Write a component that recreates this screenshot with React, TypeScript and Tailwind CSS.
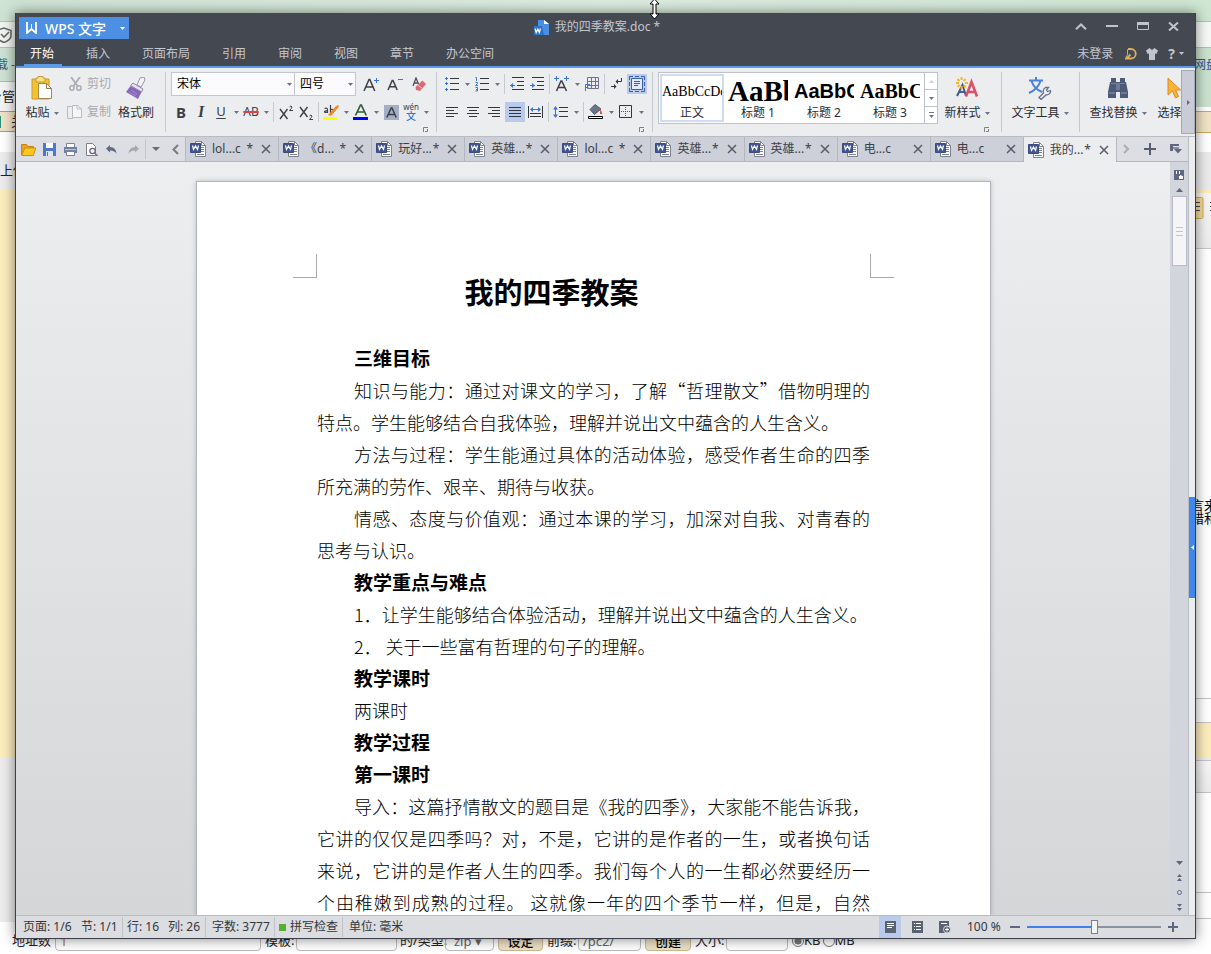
import type { ReactNode } from 'react'
import clsx from 'clsx'

const UI_FONT = 'font-["Noto_Sans","Noto_Sans_CJK_SC",sans-serif]'

interface IconProps {
  w: number
  h: number
  children: ReactNode
  className?: string
}

function Icon({ w, h, children, className }: IconProps) {
  return (
    <svg
      width={w}
      height={h}
      viewBox={`0 0 ${w} ${h}`}
      fill="none"
      aria-hidden="true"
      className={clsx('shrink-0', className)}
    >
      {children}
    </svg>
  )
}

function Caret({ className = 'text-[#6d7489]' }: { className?: string }) {
  return (
    <Icon w={5} h={3} className={className}>
      <path d="M0 0h5L2.500 3z" fill="currentColor" />
    </Icon>
  )
}

/* ---------- desktop behind the window ---------- */

function Backdrop() {
  return (
    <div className="absolute inset-0 -z-10 flex flex-col overflow-hidden bg-white text-[13px] text-[#222]">
      <div className="h-[21px] shrink-0 bg-linear-to-r from-[#cfe3d4] via-[#dcebdf] to-[#cfe6d3]" />
      <div className="flex min-h-0 flex-1 justify-between">
        <div className="flex w-4 flex-col overflow-hidden whitespace-nowrap">
          <div className="flex h-[27px] shrink-0 items-center border-y border-[#b9bdba] bg-[#f1f5f1]">
            <Icon w={12} h={16}>
              <path d="M-4 3.500 4 1l7 2.500V9c0 3-3 5-7 6.500C0 14-3 12-4 9z" stroke="#686868" strokeWidth="1.600" />
              <path d="m1 7 3 3 5-5" stroke="#686868" strokeWidth="1.600" />
            </Icon>
          </div>
          <div className="flex h-[34px] shrink-0 items-center border-b border-[#aebbb0] bg-[#cfe2d3] text-[12px] text-[#2d5c7f]">
            <span className="-ml-1">载 -</span>
          </div>
          <div className="flex h-[29px] shrink-0 items-center bg-[#f4f4f4]">
            <span className="-ml-[11px]">台管理</span>
          </div>
          <div className="flex h-[21px] shrink-0 items-center border-y border-[#c79a4a] bg-[#efe2c8]">
            <span className="h-3 w-px shrink-0 bg-[#2b8f7a]" />
            <span className="ml-[10px]">关</span>
          </div>
          <div className="h-5 shrink-0 bg-white" />
          <div className="flex h-[37px] shrink-0 items-center bg-[#ececec]">上传</div>
          <div className="h-[568px] shrink-0 bg-[#fdedbd]" />
          <div className="flex-1 bg-[#ececec]" />
        </div>
        <div className="flex w-4 flex-col overflow-hidden whitespace-nowrap">
          <div className="h-[27px] shrink-0 border-y border-[#b9bdba] bg-[#f6f9f6]" />
          <div className="h-[59px] shrink-0 bg-[#cbe2cf] pt-2 text-[12px] text-[#2d4f94]">
            <span className="-ml-px">网盘</span>
          </div>
          <div className="h-1 shrink-0 bg-white" />
          <div className="h-[22px] shrink-0 border-y border-[#c9a95c] bg-[#f0e3c6]" />
          <div className="h-[19px] shrink-0 bg-white" />
          <div className="h-[38px] shrink-0 bg-[#ebebeb]" />
          <div className="h-[3px] shrink-0 bg-[#fdedbd]" />
          <div className="flex h-[56px] shrink-0 items-start border-b border-[#c8c8c8] bg-linear-to-b from-[#f7f7f7] to-[#ededed] pt-1">
            <Icon w={16} h={22}>
              <rect x="-4" y=".5" width="12" height="21" rx="1.500" fill="#f6dc9a" stroke="#d6a758" />
              <path d="M0 5.500h5M0 9.500h5M0 13.500h5M15 5.500h1M15 9.500h1M15 13.500h1" stroke="#444" />
            </Icon>
          </div>
          <div className="h-[250px] shrink-0" />
          <div className="text-[13px] leading-[13px] text-black">
            <div className="-ml-1">言来</div>
            <div className="-ml-1">错和</div>
          </div>
          <div className="h-[174px] shrink-0 border-b border-[#c4c4c4]" />
          <div className="h-[24px] shrink-0 border-b border-[#c4c4c4]" />
          <div className="h-[34px] shrink-0 bg-[#fdedbd]" />
          <div className="h-[4px] shrink-0 border-b border-[#c4c4c4] bg-[#ececec]" />
          <div className="h-[32px] shrink-0 border-b border-[#c4c4c4] bg-linear-to-b from-[#f7f7f7] to-[#ececec]" />
          <div className="h-[100px] shrink-0 border-b border-[#c4c4c4]" />
          <div className="h-[26px] shrink-0 border-b border-[#c4c4c4]" />
        </div>
      </div>
      <form className="flex h-[32px] shrink-0 items-end pb-[3px] pl-3 whitespace-nowrap">
        <label className="flex h-7 w-[249px] items-center">
          <span className="w-[43px] pt-2">地址数</span>
          <input defaultValue="1" className="h-7 w-[206px] rounded border border-[#bbb] px-1 pt-2 text-[#c07020]" />
        </label>
        <label className="ml-1 flex h-7 items-center">
          <span className="w-[31px] pt-2">模板:</span>
          <input className="h-7 w-[101px] rounded border border-[#bbb]" />
        </label>
        <label className="ml-[3px] flex h-7 items-center">
          <span className="w-[45px] pt-2">的/类型:</span>
          <select className="h-7 w-[49px] appearance-none rounded border border-[#bbb] px-2 pt-2 text-[#666]">
            <option>zip ▾</option>
          </select>
        </label>
        <button type="button" className="ml-1 h-7 w-[45px] rounded border border-[#c9b78f] bg-[#ece0c6] pt-2 font-medium text-black">
          设定
        </button>
        <label className="ml-1 flex h-7 items-center">
          <span className="w-[31px] pt-2">前缀:</span>
          <input defaultValue="/pc2/" className="h-7 w-[63px] rounded border border-[#bbb] px-1 pt-2 text-[#666]" />
        </label>
        <button type="button" className="ml-1 h-7 w-[46px] rounded border border-[#c9b78f] bg-[#ece0c6] pt-2 font-medium text-black">
          创建
        </button>
        <label className="ml-1 flex h-7 items-center">
          <span className="w-[31px] pt-2">大小:</span>
          <input className="h-7 w-[62px] rounded border border-[#bbb]" />
        </label>
        <label className="ml-1 flex h-7 items-center pt-2">
          <input type="radio" name="unit" defaultChecked className="size-3 accent-[#777]" />KB
        </label>
        <label className="ml-[2px] flex h-7 items-center pt-2">
          <input type="radio" name="unit" className="size-3" />MB
        </label>
      </form>
    </div>
  )
}

/* ---------- title bar ---------- */

const menuTabs = ['开始', '插入', '页面布局', '引用', '审阅', '视图', '章节', '办公空间']

function TitleBar() {
  const ctl = 'flex h-[26px] w-[31px] items-center justify-center text-[#c0c4cf]'
  return (
    <header className="border-b-2 border-[#5b9bea] bg-[#444851]">
      <div className="flex h-7 items-start pr-[6px] pl-[3px]">
        <button className="mt-1 flex h-[22px] w-[110px] items-center bg-[#4c8fe3] pl-[7px] text-[14px] font-medium text-white">
          <Icon w={12} h={12}>
            <path d="M1 0v11l4.500-4L10 11V0" stroke="#fff" strokeWidth="1.800" />
            <path d="M5.500 2v4" stroke="#fff" strokeWidth="1" />
          </Icon>
          <span className="ml-[7px] flex-1 text-left whitespace-nowrap">WPS 文字</span>
          <Caret className="mr-1 text-white" />
        </button>
        <div className="flex h-7 flex-1 items-center justify-center gap-[6px] text-[12px] text-[#c3c7d0]">
          <Icon w={15} h={15}>
            <path d="M4 0h6l5 4v11H4z" fill="#4a90e2" />
            <path d="M10 0v4h5z" fill="#fff" />
            <path d="M0 6h8l2 9H0z" fill="#2f72c6" />
            <path d="m1 8.500 1.200 4L3.800 9l1.500 3.500 1.200-4" stroke="#fff" strokeWidth="1.200" />
          </Icon>
          <span>我的四季教案.doc *</span>
        </div>
        <button className={ctl} aria-label="收起功能区">
          <Icon w={12} h={7}><path d="M1 6.300 6 1.500l5 4.800" stroke="currentColor" strokeWidth="2" /></Icon>
        </button>
        <button className={ctl} aria-label="最小化">
          <Icon w={12} h={2}><path d="M0 1h12" stroke="currentColor" strokeWidth="2" /></Icon>
        </button>
        <button className={ctl} aria-label="最大化">
          <Icon w={12} h={8}><path d="M.5 0v7.500h11V0" stroke="currentColor" /><path d="M0 0h12v3H0z" fill="currentColor" /></Icon>
        </button>
        <button className={ctl} aria-label="关闭">
          <Icon w={11} h={9}><path d="m1 .5 9 8M10 .5l-9 8" stroke="currentColor" strokeWidth="2" /></Icon>
        </button>
      </div>
      <div className="flex h-[25px] pr-[11px] pl-2 text-[12px] text-[#c3c7d0]">
        <nav className="flex flex-1 gap-[18px]">
          {menuTabs.map((name, i) => (
            <button
              key={name}
              className={clsx('pr-2 pl-[6px]', i === 0 ? 'border-b-2 border-[#5b9bea] pt-[2px] text-white' : '')}
            >
              {name}
            </button>
          ))}
        </nav>
        <div className="flex items-center">
          <button>未登录</button>
          <button className="ml-3" aria-label="稻壳">
            <Icon w={12} h={12}>
              <path d="M3 1h3a4.500 4.500 0 0 1 0 9.500H1.500l4-4" stroke="#dcae5c" strokeWidth="1.800" />
              <path d="M2.500 1.500v5L0 11" stroke="#dcae5c" strokeWidth="1" />
            </Icon>
          </button>
          <button className="ml-[9px]" aria-label="皮肤">
            <Icon w={12} h={12}>
              <path d="M3.500 0 0 2.500 1.500 6 3 5.500V12h6V5.500l1.500.5L12 2.500 8.500 0 6 2z" fill="#c0c4cf" />
            </Icon>
          </button>
          <button className="ml-[10px] flex items-center gap-1 text-[14px] font-bold" aria-label="帮助">
            ?<Caret className="text-[#c0c4cf]" />
          </button>
        </div>
      </div>
    </header>
  )
}

/* ---------- ribbon ---------- */

function Divider() {
  return <div className="mx-[5px] h-[60px] w-px shrink-0 bg-[#c6c9cf]" />
}

function SmallDivider() {
  return <div className="mx-[2px] h-5 w-px shrink-0 bg-[#c6c9cf]" />
}

function Tool({ label, active, children }: { label: string; active?: boolean; children: ReactNode }) {
  return (
    <button
      aria-label={label}
      className={clsx('flex size-5 shrink-0 items-center justify-center', active && 'bg-[#b9caea]')}
    >
      {children}
    </button>
  )
}

function Drop() {
  return (
    <button aria-label="更多" className="flex h-5 w-[10px] shrink-0 items-center justify-center">
      <Caret />
    </button>
  )
}

interface BigToolProps {
  label: string
  drop?: boolean
  className: string
  children: ReactNode
}

function BigTool({ label, drop, className, children }: BigToolProps) {
  return (
    <button className={clsx('flex shrink-0 flex-col items-center', className)}>
      <span className="flex h-8 items-center">{children}</span>
      <span className="flex h-[18px] items-center gap-1 whitespace-nowrap">
        {label}
        {drop && <Caret />}
      </span>
    </button>
  )
}

function Launcher() {
  return (
    <div className="flex h-2 items-end justify-end pr-[3px]">
      <button aria-label="对话框">
        <Icon w={5} h={5}>
          <path d="M.5 5V.5H5" stroke="#7a8192" />
          <path d="M2 4.500h2.500V2" stroke="#7a8192" />
        </Icon>
      </button>
    </div>
  )
}

interface ComboProps {
  label: string
  value: string
  className: string
}

function Combo({ label, value, className }: ComboProps) {
  return (
    <div className={clsx('relative h-6', className)}>
      <select
        aria-label={label}
        className="h-6 w-full appearance-none border border-[#c3c6cc] bg-[#fbfbfd] pl-[5px] text-[12px] leading-[22px] text-black"
      >
        <option>{value}</option>
      </select>
      <Caret className="pointer-events-none absolute top-[11px] right-[3px] text-[#6d7489]" />
    </div>
  )
}

function ClipboardGroup() {
  return (
    <div className="flex shrink-0 pr-1 pl-[6px]">
      <BigTool label="粘贴" drop className="w-10">
        <Icon w={22} h={24}>
          <path d="M1 3h17v20H1z" fill="#f4c22f" stroke="#c89a35" />
          <path d="M5 2h2V.5h5V2h2v4H5z" fill="#fbe08a" stroke="#c89a35" />
          <path d="M7.500 7.500h8l5 5v10h-13z" fill="#fff" stroke="#a88b4a" />
          <path d="M15.500 7.500v5h5" stroke="#8a7a55" />
        </Icon>
      </BigTool>
      <div className="ml-1 flex w-[47px] flex-col gap-1 text-[#a7a9ad]">
        <button className="flex h-6 items-center gap-[5px] pl-[3px] whitespace-nowrap">
          <Icon w={13} h={14}>
            <path d="m2 0 6.500 9M11 0 4.500 9" stroke="#a9acb1" strokeWidth="1.800" />
            <circle cx="3" cy="11" r="2.200" stroke="#a9acb1" strokeWidth="1.500" />
            <circle cx="10" cy="11" r="2.200" stroke="#a9acb1" strokeWidth="1.500" />
          </Icon>
          剪切
        </button>
        <button className="flex h-6 items-center gap-[5px] pl-px whitespace-nowrap">
          <Icon w={15} h={15}>
            <path d="M6 1.500H.5v12H6" stroke="#b9bbc0" />
            <path d="M5.500.500h5l4 3.500v8.500h-9z" fill="#f6f6f7" stroke="#b9bbc0" />
            <path d="M10 .5V4h4.500" stroke="#b9bbc0" />
          </Icon>
          复制
        </button>
      </div>
      <BigTool label="格式刷" className="ml-[3px] w-10">
        <Icon w={20} h={23}>
          <path d="m14 1 4-1 1 3-4 7-4-2z" fill="#f5f3f8" stroke="#9a95ab" />
          <path d="m7 6 10 6-1.500 3L4.500 8.500z" fill="#e5e1ee" stroke="#9088a8" />
          <path d="M4.500 9 0 15l12 7 3.500-7z" fill="#8667bb" />
          <path d="m5 13 6 4M3 15l7 4" stroke="#a48ad0" />
        </Icon>
      </BigTool>
    </div>
  )
}

function FontGroup() {
  return (
    <div className="w-[260px] shrink-0">
      <div className="flex h-6 items-center">
        <Combo label="字体" value="宋体" className="w-[124px]" />
        <Combo label="字号" value="四号" className="-ml-px w-[62px]" />
        <div className="ml-[5px] flex flex-1 items-center justify-between pr-[2px]">
          <Tool label="增大字号">
            <Icon w={16} h={15}>
              <path d="M1 14 6 2.500h.8l5 11.500M3 10h6.800" stroke="#3c3f46" strokeWidth="1.500" />
              <path d="M11 3.500h5M13.500 1v5" stroke="#3b74d8" />
            </Icon>
          </Tool>
          <Tool label="减小字号">
            <Icon w={16} h={14}>
              <path d="m1 13 4.200-9.500h.8L10.200 13M2.800 9.800h5.800" stroke="#3c3f46" strokeWidth="1.500" />
              <path d="M11 2.500h5" stroke="#3b74d8" />
            </Icon>
          </Tool>
          <Tool label="清除格式">
            <Icon w={15} h={15}>
              <path d="m1 9 3-8 2.500 6M2 6h4" stroke="#4d5057" strokeWidth="1.300" />
              <path d="m3.500 10 7-6.500L14 7l-6 7-4-1z" fill="#dc6a73" />
              <path d="m5.500 8 5 3.500" stroke="#f3b9bd" />
            </Icon>
          </Tool>
        </div>
      </div>
      <div className="mt-1 flex h-6 items-center text-[#3c3f46]">
        <Tool label="加粗"><span className="text-[15px] font-bold">B</span></Tool>
        <Tool label="倾斜"><span className='font-["Liberation_Serif",serif] text-[16px] font-bold italic'>I</span></Tool>
        <Tool label="下划线"><span className="text-[13px] underline underline-offset-2">U</span></Tool>
        <Drop />
        <Tool label="删除线"><span className="text-[12px] line-through decoration-[#e04343] decoration-2">AB</span></Tool>
        <Drop />
        <SmallDivider />
        <Tool label="上标">
          <Icon w={15} h={15}>
            <path d="m1 4 7.500 10M8.500 4 1 14" stroke="currentColor" strokeWidth="1.400" />
            <path d="M10.500 2q1.500-2 2.500 0 0 1-2.500 3.500H14" stroke="currentColor" />
          </Icon>
        </Tool>
        <Tool label="下标">
          <Icon w={15} h={15}>
            <path d="m1 2 7.500 10M8.500 2 1 12" stroke="currentColor" strokeWidth="1.400" />
            <path d="M10.500 11q1.500-2 2.500 0 0 1-2.500 3.500H14" stroke="currentColor" />
          </Icon>
        </Tool>
        <SmallDivider />
        <Tool label="突出显示">
          <Icon w={16} h={16}>
            <path d="M1.500 4.500q3-1 3 1V9M4.500 6.500C0 6.500 1 9.500 4.500 8M7.500 1v8q4 0 3-3-1-1.500-3 0" stroke="#3c3f46" strokeWidth="1.200" />
            <path d="m5 11 8-9 3-1-1 3-7 8z" fill="#f08a2c" />
            <path d="M0 13h14v3H0z" fill="#ff0" />
          </Icon>
        </Tool>
        <Drop />
        <Tool label="字体颜色">
          <Icon w={16} h={16}>
            <path d="M2.500 11.500 7.500 1h.8l5 10.500M4.500 8h7" stroke="#2f5d3a" strokeWidth="1.700" />
            <path d="M0 13h15v3H0z" fill="#00f" />
          </Icon>
        </Tool>
        <Drop />
        <Tool label="字符底纹">
          <Icon w={15} h={15}>
            <path d="M0 0h15v15H0z" fill="#a3afc4" />
            <path d="M2.800 12.500 7.200 3h.8l4.200 9.500M4.500 9.500h6" stroke="#3c3f46" strokeWidth="1.500" />
          </Icon>
        </Tool>
        <Tool label="拼音指南">
          <span className="flex flex-col items-center">
            <span className="text-[8px] leading-[9px]">wén</span>
            <span className="text-[10px] leading-[11px] font-medium text-[#3b74d8]">文</span>
          </span>
        </Tool>
        <Drop />
      </div>
      <Launcher />
    </div>
  )
}

/* Horizontal text lines used by the alignment buttons. */
function AlignIcon({ kind }: { kind: 'left' | 'center' | 'right' | 'justify' }) {
  const paths = {
    left: 'M0 .5h12M0 3.500h8M0 6.500h12M0 9.500h8',
    center: 'M0 .5h12M2 3.500h8M0 6.500h12M2 9.500h8',
    right: 'M0 .5h12M4 3.500h8M0 6.500h12M4 9.500h8',
    justify: 'M0 .5h12M0 3.500h12M0 6.500h12M0 9.500h12',
  }
  return (
    <Icon w={12} h={10}>
      <path d={paths[kind]} stroke="#33363d" />
    </Icon>
  )
}

function ParagraphGroup() {
  return (
    <div className="w-[205px] shrink-0">
      <div className="flex h-6 items-center">
        <Tool label="项目符号">
          <Icon w={14} h={14}>
            <path d="M5 1.500h9M5 6.500h9M5 12.500h9" stroke="#33363d" />
            <path d="M0 1.500h3M1.500 0v3M0 6.500h3M1.500 5v3M0 12.500h3M1.500 11v3" stroke="#3b74d8" />
          </Icon>
        </Tool>
        <Drop />
        <Tool label="编号">
          <Icon w={14} h={16}>
            <path d="M5 2.500h9M5 7.500h9M5 13.500h9" stroke="#33363d" />
            <path d="M.5 1.500h1V5M.5 6.500h2v1l-2 2h2.500M.5 11.500h2v3.500h-2M1 13.500h1.500" stroke="#3b74d8" />
          </Icon>
        </Tool>
        <Drop />
        <SmallDivider />
        <Tool label="减少缩进">
          <Icon w={14} h={14}>
            <path d="M2 .5h12M7 4.500h7M7 8.500h7M2 12.500h12" stroke="#33363d" />
            <path d="M0 8.500h5" stroke="#3b74d8" />
            <path d="m3 6-3 2.500L3 11z" fill="#3b74d8" />
          </Icon>
        </Tool>
        <Tool label="增加缩进">
          <Icon w={14} h={14}>
            <path d="M2 .5h12M7 4.500h7M7 8.500h7M2 12.500h12" stroke="#33363d" />
            <path d="M0 8.500h5" stroke="#3b74d8" />
            <path d="m2 6 3 2.500L2 11z" fill="#3b74d8" />
          </Icon>
        </Tool>
        <SmallDivider />
        <Tool label="文字工具">
          <Icon w={16} h={16}>
            <path d="m2.500 15 4.500-10h.8L12.500 15M4.500 11.500h6" stroke="#3c3f46" strokeWidth="1.500" />
            <path d="M0 2.500h5M2.500 0v5M10 2.500h5M12.500 0v5" stroke="#3b74d8" />
          </Icon>
        </Tool>
        <Drop />
        <Tool label="插入表格">
          <Icon w={14} h={14}>
            <path d="M2.500.5h11v11h-11zM6.500.5v11M10.500.5v11M2.500 4.500h11M2.500 8.500h11" stroke="#6d7489" />
            <path d="M.5 14V7.500H5M.5 10.500h3" stroke="#3b74d8" />
          </Icon>
        </Tool>
        <SmallDivider />
        <Tool label="制表位">
          <Icon w={12} h={12}>
            <path d="M10.500 0v3.500H5M0 8.500h4" stroke="#33363d" />
            <path d="M7 1v5L4.500 3.500zM3 6v5l2.500-2.500z" fill="#33363d" />
          </Icon>
        </Tool>
        <Tool label="显示段落布局" active>
          <Icon w={16} h={16}>
            <path d="M.5 4V.5H4M12 .5h3.500V4M15.500 12v3.500H12M4 15.500H.5V12M.5 6v4M15.500 6v4M6 .5h4M6 15.500h4" stroke="#3b5fae" />
            <path d="M2.500 2.500h11v11h-11z" fill="#e4ebf8" stroke="#3b5fae" />
            <path d="M5 5.500h6M5 7.500h6M5 9.500h4" stroke="#3b5fae" />
          </Icon>
        </Tool>
      </div>
      <div className="mt-1 flex h-6 items-center">
        <div className="flex gap-px">
          <Tool label="左对齐"><AlignIcon kind="left" /></Tool>
          <Tool label="居中"><AlignIcon kind="center" /></Tool>
          <Tool label="右对齐"><AlignIcon kind="right" /></Tool>
          <Tool label="两端对齐" active><AlignIcon kind="justify" /></Tool>
          <Tool label="分散对齐">
            <Icon w={16} h={12}>
              <path d="M.5 0v12M14.500 0v12M2 7.500h11M2 10.500h11" stroke="#33363d" />
              <path d="M3 3.500h9" stroke="#3b74d8" />
              <path d="M5 1 2 3.500 5 6zM10 1l3 2.500L10 6z" fill="#3b74d8" />
            </Icon>
          </Tool>
        </div>
        <SmallDivider />
        <Tool label="行距">
          <Icon w={16} h={12}>
            <path d="M6 1.500h9M6 5.500h9M6 10.500h9" stroke="#33363d" />
            <path d="M2.500 1v10" stroke="#3b74d8" />
            <path d="M0 3.500 2.500 0 5 3.500zM0 8.500 2.500 12 5 8.500z" fill="#3b74d8" />
          </Icon>
        </Tool>
        <Drop />
        <SmallDivider />
        <Tool label="底纹颜色">
          <Icon w={16} h={16}>
            <path d="m2 5.500 5-5L13 5 6.500 10.500z" fill="#6b7388" stroke="#525a6e" />
            <path d="m12 4 2.500 6H12z" fill="#d9534a" />
            <path d="M.5 12.500h14v2H.5z" fill="#fff" stroke="#000" />
          </Icon>
        </Tool>
        <Drop />
        <Tool label="边框">
          <Icon w={14} h={14}>
            <path d="M.5.5h12v12H.5z" stroke="#33363d" />
            <path d="M6.500 2v9M2 6.500h9" stroke="#555" strokeDasharray="1 1" />
          </Icon>
        </Tool>
        <Drop />
      </div>
      <Launcher />
    </div>
  )
}

const styleList = [
  { name: '正文', sample: 'AaBbCcDd', cls: 'font-["Liberation_Serif",serif] text-[14px]', active: true },
  { name: '标题 1', sample: 'AaBb', cls: 'font-["Liberation_Serif",serif] text-[29px] font-bold', active: false },
  { name: '标题 2', sample: 'AaBbC', cls: 'font-["Liberation_Sans",sans-serif] text-[20px] font-bold', active: false },
  { name: '标题 3', sample: 'AaBbC', cls: 'font-["Liberation_Serif",serif] text-[20px] font-bold', active: false },
]

function StyleGallery() {
  const arrow = 'flex flex-1 items-center justify-center'
  return (
    <div className="flex h-[52px] w-[280px] shrink-0 border border-[#bfc2c8] bg-white">
      {styleList.map((s) => (
        <button
          key={s.name}
          className={clsx(
            'm-px flex w-16 flex-col items-center overflow-hidden border-2',
            s.active ? 'border-[#cfdcf5]' : 'border-transparent'
          )}
        >
          <span className={clsx('h-[29px] w-full overflow-hidden text-left leading-[31px] whitespace-nowrap text-black', s.cls)}>
            {s.sample}
          </span>
          <span className="h-[15px] leading-[15px]">{s.name}</span>
        </button>
      ))}
      <div className="ml-auto flex w-[13px] flex-col divide-y divide-[#bfc2c8] border-l border-[#bfc2c8]">
        <button className={arrow} aria-label="上一行">
          <Caret className="rotate-180 text-[#cfd1d6]" />
        </button>
        <button className={arrow} aria-label="下一行">
          <Caret />
        </button>
        <button className={arrow} aria-label="全部样式">
          <Icon w={5} h={6}><path d="M0 .5h5" stroke="#6d7489" /><path d="M0 3h5L2.500 6z" fill="#6d7489" /></Icon>
        </button>
      </div>
    </div>
  )
}

function Ribbon() {
  return (
    <div className="flex h-[69px] shrink-0 border-b border-[#b9bcc4] bg-[#ecedef] text-[12px] text-[#2b2d33]">
      <div className="flex min-w-0 flex-1 items-start overflow-hidden pt-1">
        <ClipboardGroup />
        <Divider />
        <FontGroup />
        <Divider />
        <ParagraphGroup />
        <Divider />
        <StyleGallery />
        <div className="ml-1 w-[50px] shrink-0">
          <BigTool label="新样式" drop className="w-[50px]">
            <Icon w={24} h={22}>
              <path d="M2 19 7.500 8l3.500 11M4 15h6" stroke="#46598c" strokeWidth="2" />
              <path d="M11 19.500 16.500 5 22 19.500M13 15h7" stroke="#dc5068" strokeWidth="2.600" />
              <path d="M6.500 0v3M6.500 9v3M1 6h3M10 6h3M2.500 2l2 2M8.800 8.300l2 2M10.500 2l-2 2M2.500 10l2-2" stroke="#f5b72c" strokeWidth="2" />
            </Icon>
          </BigTool>
          <div className="mt-[2px]"><Launcher /></div>
        </div>
        <div className="ml-1"><Divider /></div>
        <BigTool label="文字工具" drop className="ml-px w-[64px]">
          <Icon w={24} h={23}>
            <path d="M8 0v3M1 3.500h14M3.500 4Q6 12 14 15M12.500 4Q10 12 1 16" stroke="#4a82dc" strokeWidth="2" />
            <path d="M11 20.500 15.500 16q-1-4 2-5.500l3 .0-2 2.500 1 1.500 3-1q.5 4-4.500 4.500L13 22.500z" fill="#eef0f4" stroke="#68718a" strokeWidth="1.300" />
          </Icon>
        </BigTool>
        <div className="ml-[2px]"><Divider /></div>
        <BigTool label="查找替换" drop className="w-[66px]">
          <Icon w={22} h={20}>
            <path d="M4 0h5v4h4V0h5v4h1l2 10v6h-8v-6H9v6H1v-6L3 4h1z" fill="#4d5a78" />
            <path d="M2 15h6M14 15h6M10 5v7M12 5v7" stroke="#8f9bb5" />
            <path d="M4 5.500h5M13 5.500h5" stroke="#77839f" />
          </Icon>
        </BigTool>
        <BigTool label="选择" drop className="ml-[2px] w-[42px]">
          <Icon w={14} h={22}>
            <path d="M1 1v17l4.500-4 3 7 3-1.500-3-6.500h5z" fill="#f9b233" stroke="#dc8a2a" />
          </Icon>
        </BigTool>
      </div>
      <button
        aria-label="向右滚动"
        className="my-[2px] flex w-[14px] shrink-0 items-center justify-center border border-[#a4a8b8] bg-[#c9ccd7]"
      >
        <Icon w={3} h={5}><path d="m0 0 3 2.500L0 5z" fill="#5f6780" /></Icon>
      </button>
    </div>
  )
}

/* ---------- quick access bar and document tabs ---------- */

const docTabs = [
  { name: 'lol...c', dirty: true },
  { name: '《d...', dirty: true },
  { name: '玩好...', dirty: true },
  { name: '英雄...', dirty: true },
  { name: 'lol...c', dirty: true },
  { name: '英雄...', dirty: true },
  { name: '英雄...', dirty: true },
  { name: '电...c', dirty: false },
  { name: '电...c', dirty: false },
  { name: '我的...', dirty: true },
]

function DocTab({ name, dirty, active }: { name: string; dirty: boolean; active: boolean }) {
  return (
    <div
      className={clsx(
        'flex min-w-0 flex-1 items-center border-l border-[#b3b7c0] pr-[7px] pl-1',
        active ? 'bg-[#ecedef]' : 'border-b bg-[#cdd0d8]'
      )}
    >
      <button className="flex min-w-0 flex-1 items-center text-[12px] whitespace-nowrap text-[#3c3f46]">
        <Icon w={17} h={16}>
          <path d="M5.500.500h6l4 4v11h-10z" fill="#fff" stroke="#7c8290" />
          <path d="M11.500.500v4h4M11 6.500h3M11 8.500h3M11 10.500h3M7 13.500h7" stroke="#7c8290" />
          <path d="M.5 2.500h10v9H.5z" fill="#44568f" stroke="#3b4c85" />
          <path d="m2.500 4.500 1 4 2-3.500 2 3.500 1-4" stroke="#fff" strokeWidth="1.200" />
        </Icon>
        <span className="ml-[5px] min-w-0 flex-1 text-left">{name}</span>
        {dirty && <span className="mr-2">*</span>}
      </button>
      <button aria-label="关闭标签">
        <Icon w={10} h={10}><path d="m1 1 8 8M9 1 1 9" stroke="#555c6e" strokeWidth="1.500" /></Icon>
      </button>
    </div>
  )
}

function TabBar() {
  return (
    <div className="flex h-[25px] shrink-0 bg-[#dcdee3] text-[#6d7489]">
      <div className="flex w-[169px] shrink-0 items-center border-b border-[#b3b7c0] pl-[5px]">
        <button aria-label="打开">
          <Icon w={15} h={13}>
            <path d="M.5 12V1.500h5l1.500 2h5.500V5" fill="#e9a21d" stroke="#c98216" />
            <path d="m.8 12.500 3-7.500h11l-2.500 7.500z" fill="#fcc81c" stroke="#cd8b16" />
          </Icon>
        </button>
        <button className="ml-[7px]" aria-label="保存">
          <Icon w={13} h={13}>
            <path d="M0 0h13v13H0z" fill="#4f78c4" />
            <path d="M3 0h7v5H3z" fill="#fff" /><path d="M3 8h7v5H3z" fill="#dfe5f1" />
            <path d="M4.500 9v4" stroke="#4f78c4" />
          </Icon>
        </button>
        <button className="ml-2" aria-label="打印">
          <Icon w={13} h={13}>
            <path d="M2.500.5h8v4h-8z" fill="#fff" stroke="#7b8598" />
            <path d="M0 4h13v6H0z" fill="#6f7f9e" /><path d="M1 6.500h11" stroke="#b9c3d6" />
            <path d="M2.500 8.500h8v4h-8z" fill="#fff" stroke="#7b8598" />
          </Icon>
        </button>
        <button className="ml-2" aria-label="打印预览">
          <Icon w={13} h={13}>
            <path d="M1.500.5h6l3 3v9h-9z" fill="#fff" stroke="#777d8a" />
            <circle cx="7.500" cy="8" r="2.700" fill="#eef0f4" stroke="#6a6580" strokeWidth="1.200" />
            <path d="m9.500 10 3 3" stroke="#8f6a8c" strokeWidth="1.600" />
          </Icon>
        </button>
        <button className="ml-2" aria-label="撤销">
          <Icon w={11} h={9}>
            <path d="M4 0v2q6 0 6.500 7Q9 5.500 4 5.500v2L0 3.800z" fill="#5f6b85" />
          </Icon>
        </button>
        <button className="ml-[11px]" aria-label="恢复">
          <Icon w={11} h={9}>
            <path d="M7 0v2Q1 2 .5 9 2 5.500 7 5.500v2l4-3.700z" fill="#a5a9b1" />
          </Icon>
        </button>
        <span className="ml-[6px] h-5 w-px bg-[#c3c6cd]" />
        <button className="ml-[6px]" aria-label="自定义">
          <Icon w={8} h={4}><path d="M0 0h8L4 4z" fill="#666c7a" /></Icon>
        </button>
        <button className="ml-3" aria-label="向左">
          <Icon w={7} h={11}><path d="M6 1 1.500 5.500 6 10" stroke="#777c88" strokeWidth="2" /></Icon>
        </button>
      </div>
      <div className="flex min-w-0 flex-1">
        {docTabs.map((t, i) => (
          <DocTab key={i} name={t.name} dirty={t.dirty} active={i === docTabs.length - 1} />
        ))}
      </div>
      <div className="flex w-[72px] shrink-0 items-center border-b border-l border-[#b3b7c0] pl-[6px]">
        <button aria-label="向右">
          <Icon w={7} h={10}><path d="m1 1 4 4-4 4" stroke="#a9adb6" strokeWidth="2" /></Icon>
        </button>
        <button className="ml-[14px]" aria-label="新建标签">
          <Icon w={12} h={12}><path d="M0 6h12M6 0v12" stroke="#555d73" strokeWidth="2" /></Icon>
        </button>
        <button className="ml-[14px]" aria-label="标签列表">
          <Icon w={12} h={10}>
            <path d="M0 0h9v2H3v5H0z" fill="#5f6780" />
            <path d="M3 3h6v2H3z" fill="#8a90a2" />
            <path d="M4 5h8l-4 4.500z" fill="#5f6780" />
          </Icon>
        </button>
      </div>
    </div>
  )
}

/* ---------- document ---------- */

function Heading({ children }: { children: string }) {
  return <h2 className="indent-[37px] text-[19px] font-bold">{children}</h2>
}

function Para({ children, className }: { children: ReactNode; className?: string }) {
  return <p className={clsx('indent-[37px] text-justify', className)}>{children}</p>
}

function DocumentPage() {
  return (
    <article
      lang="zh-CN"
      className='ml-[180px] w-[795px] shrink-0 overflow-hidden border border-b-0 border-[#b0b3bc] bg-white font-["Noto_Sans_CJK_SC",sans-serif] text-[18px] leading-8 font-light text-black shadow-[0_0_5px_rgba(0,0,0,0.2)]'
    >
      <div className="flex justify-between px-24 pt-[72px]">
        <div className="size-6 border-r border-b border-[#aaa]" />
        <div className="size-6 border-b border-l border-[#aaa]" />
      </div>
      <div className="px-[120px]">
        <h1 className="-mt-[3px] mb-[35px] pr-[84px] text-center text-[29px] font-bold">我的四季教案</h1>
        <Heading>三维目标</Heading>
        <Para>知识与能力：通过对课文的学习，了解“哲理散文”借物明理的特点。学生能够结合自我体验，理解并说出文中蕴含的人生含义。</Para>
        <Para>方法与过程：学生能通过具体的活动体验，感受作者生命的四季所充满的劳作、艰辛、期待与收获。</Para>
        <Para>情感、态度与价值观：通过本课的学习，加深对自我、对青春的思考与认识。</Para>
        <Heading>教学重点与难点</Heading>
        <Para>1．让学生能够结合体验活动，理解并说出文中蕴含的人生含义。</Para>
        <Para>2． 关于一些富有哲理的句子的理解。</Para>
        <Heading>教学课时</Heading>
        <Para>两课时</Para>
        <Heading>教学过程</Heading>
        <Heading>第一课时</Heading>
        <Para className="[text-align-last:justify]">
          导入：这篇抒情散文的题目是《我的四季》，大家能不能告诉我，它讲的仅仅是四季吗？对，不是，它讲的是作者的一生，或者换句话来说，它讲的是作者人生的四季。我们每个人的一生都必然要经历一个由稚嫩到成熟的过程。 这就像一年的四个季节一样，但是，自然
        </Para>
      </div>
    </article>
  )
}

function ScrollColumn() {
  return (
    <div className="flex w-[18px] shrink-0 flex-col items-center bg-[#d3d5dc] text-[#5f6780]">
      <button className="mt-2 shrink-0" aria-label="浏览对象">
        <Icon w={10} h={10}>
          <path d="M0 0h10v10H0z" fill="#5f6780" />
          <path d="M2.500 1v3M5.500 1v3" stroke="#fff" />
          <path d="M4.500 9.500v-3l2-2 3 1.500v3.500z" fill="#fff" stroke="#5f6780" />
        </Icon>
      </button>
      <button className="mt-2 shrink-0" aria-label="向上滚动">
        <Icon w={7} h={4}><path d="M0 4h7L3.500 0z" fill="currentColor" /></Icon>
      </button>
      <div className="mt-1 flex h-[70px] w-[15px] shrink-0 flex-col items-center justify-center gap-[3px] border border-[#b9bcc8] bg-[#f5f5f7]">
        <span className="h-px w-[7px] bg-[#c3c5cc]" />
        <span className="h-px w-[7px] bg-[#c3c5cc]" />
        <span className="h-px w-[7px] bg-[#c3c5cc]" />
      </div>
      <div className="mt-auto mb-1 flex flex-col items-center gap-[9px]">
        <button aria-label="向下滚动">
          <Icon w={7} h={4}><path d="M0 0h7L3.500 4z" fill="currentColor" /></Icon>
        </button>
        <button aria-label="上一页">
          <Icon w={5} h={7}><path d="M0 3h5L2.500 0zM0 7h5L2.500 4z" fill="currentColor" /></Icon>
        </button>
        <button aria-label="选择浏览对象">
          <Icon w={5} h={5}><circle cx="2.500" cy="2.500" r="2" stroke="currentColor" /></Icon>
        </button>
        <button aria-label="下一页">
          <Icon w={5} h={7}><path d="M0 0h5L2.500 3zM0 4h5L2.500 7z" fill="currentColor" /></Icon>
        </button>
      </div>
    </div>
  )
}

/* ---------- status bar ---------- */

function StatusDivider() {
  return <span className="h-5 w-px bg-[#bfc2c9]" />
}

function StatusBar() {
  const view = 'flex h-[22px] w-[22px] items-center justify-center'
  return (
    <footer className="flex h-[23px] shrink-0 items-center border-t border-[#b9bcc4] bg-[#dcdde1] text-[12px] whitespace-nowrap text-[#33363d]">
      <span className="w-[59px] pl-[7px]">页面: 1/6</span>
      <span className="w-[47px] pl-[6px]">节: 1/1</span>
      <StatusDivider />
      <span className="w-[41px] pl-1">行: 16</span>
      <span className="w-[41px] pl-1">列: 26</span>
      <StatusDivider />
      <span className="w-[68px] pl-[6px]">字数: 3777</span>
      <StatusDivider />
      <button className="flex w-[67px] items-center gap-1 pl-1">
        <span className="size-[7px] bg-[#55b030]" />
        拼写检查
      </button>
      <StatusDivider />
      <span className="flex-1 pl-[6px]">单位: 毫米</span>
      <button className={clsx(view, 'bg-[#b9caea]')} aria-label="页面视图">
        <Icon w={11} h={12}><path d="M0 0h11v12H0z" fill="#5b6274" /><path d="M2 2.500h7M2 4.500h7M2 6.500h5" stroke="#fff" /></Icon>
      </button>
      <button className={clsx(view, 'ml-[5px]')} aria-label="大纲视图">
        <Icon w={11} h={12}><path d="M0 0h11v12H0z" fill="#5b6274" /><path d="M2 2.500h1M4 2.500h5M2 5.500h1M4 5.500h5M2 8.500h1M4 8.500h5" stroke="#fff" /></Icon>
      </button>
      <button className={clsx(view, 'ml-[6px]')} aria-label="网页视图">
        <Icon w={12} h={12}>
          <path d="M0 0h10v12H0z" fill="#5b6274" /><path d="M2 2.500h6" stroke="#fff" />
          <circle cx="8" cy="8.500" r="3.500" fill="#5b6274" stroke="#dcdde1" />
          <path d="M6 8.500h4M8 6.500v4" stroke="#fff" />
        </Icon>
      </button>
      <span className="ml-[11px] w-[43px]">100 %</span>
      <button aria-label="缩小">
        <Icon w={10} h={10}><path d="M0 5h10" stroke="#5f6780" strokeWidth="2" /></Icon>
      </button>
      <input
        type="range"
        aria-label="显示比例"
        defaultValue={50}
        className="mx-[7px] h-[14px] w-[134px] appearance-none bg-transparent [&::-webkit-slider-runnable-track]:h-[2px] [&::-webkit-slider-runnable-track]:bg-linear-to-r [&::-webkit-slider-runnable-track]:from-[#3f80ea] [&::-webkit-slider-runnable-track]:from-50% [&::-webkit-slider-runnable-track]:to-[#8a919f] [&::-webkit-slider-runnable-track]:to-50% [&::-webkit-slider-thumb]:-mt-[6px] [&::-webkit-slider-thumb]:h-[14px] [&::-webkit-slider-thumb]:w-[7px] [&::-webkit-slider-thumb]:appearance-none [&::-webkit-slider-thumb]:border [&::-webkit-slider-thumb]:border-[#7c7f86] [&::-webkit-slider-thumb]:bg-[#f4f4f6]"
      />
      <button className="mr-[17px]" aria-label="放大">
        <Icon w={10} h={10}><path d="M0 5h10M5 0v10" stroke="#5f6780" strokeWidth="2" /></Icon>
      </button>
    </footer>
  )
}

export default function App() {
  return (
    <div lang="zh-CN" className={clsx('relative isolate flex h-screen flex-col', UI_FONT)}>
      <Backdrop />
      <main className="mx-[15px] mt-[13px] mb-[15px] flex min-h-0 flex-1 flex-col border-x border-b border-[#3c3f49] bg-[#ecedef] shadow-[0_0_12px_rgba(0,0,0,0.5)]">
        <TitleBar />
        <Ribbon />
        <div className="flex min-h-0 flex-1">
          <div className="flex min-w-0 flex-1 flex-col border-r border-[#b9bcc4]">
            <TabBar />
            <div className="flex min-h-0 flex-1 bg-linear-to-b from-[#edeef0] to-[#d5d6d8]">
              <div className="flex min-w-0 flex-1 overflow-hidden pt-[19px]">
                <DocumentPage />
              </div>
              <ScrollColumn />
            </div>
          </div>
          <div className="flex w-[6px] shrink-0 flex-col justify-center pt-[43px]">
            <button aria-label="展开任务窗格" className="flex h-[101px] items-center justify-center bg-[#3f87ea]">
              <Icon w={3} h={5}><path d="M3 0 0 2.500 3 5z" fill="#fff" /></Icon>
            </button>
          </div>
        </div>
        <StatusBar />
      </main>
      <Icon w={11} h={20} className="absolute top-0 left-[649px]">
        <path d="M5.500-1 10 4H7v10h3l-4.500 5L1 14h3V4H1z" fill="#fff" stroke="#000" />
      </Icon>
    </div>
  )
}
